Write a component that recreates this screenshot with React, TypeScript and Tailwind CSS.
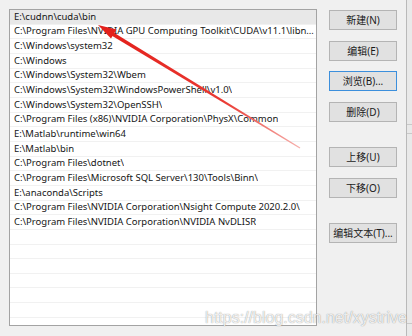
import React from "react";

const paths = [
  "E:\\cudnn\\cuda\\bin",
  "C:\\Program Files\\NVIDIA GPU Computing Toolkit\\CUDA\\v11.1\\libnvvp",
  "C:\\Windows\\system32",
  "C:\\Windows",
  "C:\\Windows\\System32\\Wbem",
  "C:\\Windows\\System32\\WindowsPowerShell\\v1.0\\",
  "C:\\Windows\\System32\\OpenSSH\\",
  "C:\\Program Files (x86)\\NVIDIA Corporation\\PhysX\\Common",
  "E:\\Matlab\\runtime\\win64",
  "E:\\Matlab\\bin",
  "C:\\Program Files\\dotnet\\",
  "C:\\Program Files\\Microsoft SQL Server\\130\\Tools\\Binn\\",
  "E:\\anaconda\\Scripts",
  "C:\\Program Files\\NVIDIA Corporation\\Nsight Compute 2020.2.0\\",
  "C:\\Program Files\\NVIDIA Corporation\\NVIDIA NvDLISR",
  "", "", "", "", "", "", "", "",
];

function DlgButton({ label, focused, className }: { label: string; focused?: boolean; className?: string }) {
  return (
    <button
      className={
        "h-[20px] w-[68px] flex items-center justify-center bg-[#e1e1e1] text-[10px] leading-[14px] text-[#1a1a1a] font-['Noto_Sans','Noto_Sans_CJK_SC',sans-serif] border " +
        (focused ? "border-[#3c8fdc]" : "border-[#b4b4b4]") +
        " " +
        (className ?? "")
      }
    >
      {label}
    </button>
  );
}

export default function App() {
  return (
    <div className="relative w-[412px] h-[336px] bg-[#f0f0f0] overflow-hidden flex font-['Noto_Sans',sans-serif]">
      {/* path list */}
      <div className="ml-[9px] mt-[9px] w-[308px] h-[317px] border border-[#a3a3a3] bg-white overflow-hidden shrink-0">
        {paths.map((p, i) => (
          <div
            key={i}
            className={
              "h-[14.66px] flex items-center pl-[4px] pr-[1px] border-b border-[#f1f1f1] text-[9.5px] text-[#161616] " +
              (i === 0 ? "bg-[#e8e8e8]" : "")
            }
          >
            <span className="truncate leading-[14px]">{p}</span>
          </div>
        ))}
      </div>

      {/* buttons */}
      <div className="ml-[12px] mt-[10px] flex flex-col gap-[10.5px] shrink-0">
        <DlgButton label="新建(N)" />
        <DlgButton label="编辑(E)" />
        <DlgButton label="浏览(B)..." focused />
        <DlgButton label="删除(D)" />
        <DlgButton label="上移(U)" className="mt-[15px]" />
        <DlgButton label="下移(O)" />
        <DlgButton label="编辑文本(T)..." className="mt-[15px]" />
      </div>

      {/* edge of the window behind */}
      <div className="ml-[9px] w-[6px] h-full border-l border-[#b9b9b9] bg-[#e9e9e9] flex flex-col">
        <div className="mt-[124px] h-[10px] border-y border-[#c9c9c9]" />
        <div className="mt-auto mb-[12px] h-[1px] bg-[#c9c9c9]" />
      </div>

      {/* red arrow */}
      <svg className="absolute left-0 top-0 pointer-events-none" width="412" height="336">
        <defs>
          <linearGradient id="shaft" x1="110" y1="32" x2="300" y2="148" gradientUnits="userSpaceOnUse">
            <stop offset="0" stopColor="#e3201b" />
            <stop offset="0.6" stopColor="#ea3a33" />
            <stop offset="1" stopColor="#f6b0ac" />
          </linearGradient>
        </defs>
        <polygon points="110,30.2 300.3,147.6 299.7,148.4 109,34" fill="url(#shaft)" />
        <polygon points="98,25 116.5,29.6 111,38.6" fill="#e3201b" />
      </svg>

      {/* watermark */}
      <div className="absolute left-[205px] top-[306px] text-[16px] font-['Liberation_Sans',sans-serif] text-white/85 [text-shadow:0_0_1px_rgba(0,0,0,0.5)] pointer-events-none">
        https://blog.csdn.net/xystrive
      </div>
    </div>
  );
}
